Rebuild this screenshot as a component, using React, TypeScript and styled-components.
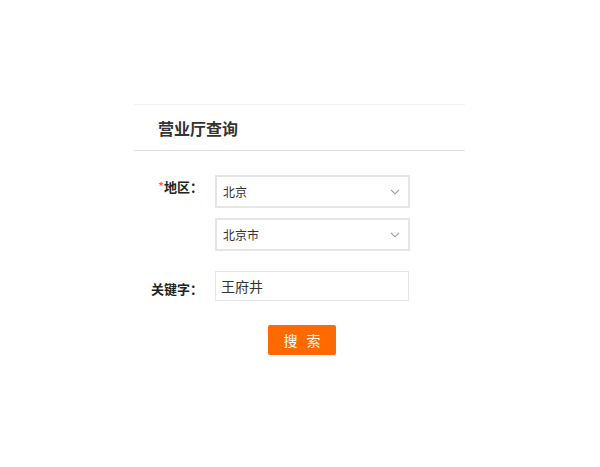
import React from "react";
import styled, { createGlobalStyle } from "styled-components";

const Global = createGlobalStyle`
  html, body { margin: 0; padding: 0; background: #fff; }
  body { font-family: "Noto Sans CJK SC", "Noto Sans", sans-serif; color: #333; text-spacing-trim: space-all; }
  * { box-sizing: border-box; }
`;

const Card = styled.div`
  width: 331px;
  margin: 104px 0 0 134px;
  border-top: 1px solid #f2f2f2;
`;

const Header = styled.div`
  height: 46px;
  border-bottom: 1px solid #e3e3e3;
  display: flex;
  align-items: center;
  padding-left: 24px;
`;

const Title = styled.h2`
  margin: 0;
  font-size: 16px;
  font-weight: bold;
  color: #333;
  line-height: 20px;
`;

const Form = styled.div`
  padding-top: 24px;
  display: flex;
  flex-direction: column;
`;

const Row = styled.div<{ $mt?: number }>`
  display: flex;
  align-items: flex-start;
  margin-top: ${(p) => p.$mt ?? 0}px;
`;

const Label = styled.div<{ $pt: number }>`
  width: 72px;
  text-align: right;
  font-size: 13px;
  font-weight: bold;
  line-height: 20px;
  color: #222;
  padding-top: ${(p) => p.$pt}px;
  padding-right: 3px;
  flex-shrink: 0;
  text-spacing-trim: space-all;
`;

const Star = styled.span`
  color: #ff4d4d;
  font-weight: normal;
`;

const Fields = styled.div`
  margin-left: 9px;
  display: flex;
  flex-direction: column;
  gap: 10px;
`;

const Select = styled.div`
  width: 195px;
  height: 33px;
  border: 2px solid #e5e5e5;
  display: flex;
  align-items: center;
  justify-content: space-between;
  padding: 0 8px 0 6px;
  font-size: 12px;
  color: #333;
  background: #fff;
`;

const Input = styled.div`
  width: 194px;
  height: 30px;
  border: 1px solid #e5e5e5;
  display: flex;
  align-items: center;
  padding-left: 5px;
  font-size: 14px;
  color: #333;
`;

const ButtonRow = styled.div`
  display: flex;
  justify-content: flex-start;
  padding-left: 134px;
  margin-top: 24px;
`;

const Button = styled.button`
  width: 68px;
  height: 30px;
  border: none;
  border-radius: 2px;
  background: #ff6a00;
  color: #fff;
  font-family: inherit;
  font-size: 14px;
  letter-spacing: 3px;
  padding: 0 0 0 3px;
  cursor: pointer;
`;

const Chevron = () => (
  <svg width="10" height="6" viewBox="0 0 10 6" fill="none">
    <path d="M1 0.8 L5 4.8 L9 0.8" stroke="#999" strokeWidth="1.1" />
  </svg>
);

export default function App() {
  return (
    <>
      <Global />
      <Card>
        <Header>
          <Title>营业厅查询</Title>
        </Header>
        <Form>
          <Row>
            <Label $pt={2}>
              <Star>*</Star>地区：
            </Label>
            <Fields>
              <Select>
                <span>北京</span>
                <Chevron />
              </Select>
              <Select>
                <span>北京市</span>
                <Chevron />
              </Select>
            </Fields>
          </Row>
          <Row $mt={20}>
            <Label $pt={8}>关键字：</Label>
            <Fields>
              <Input>王府井</Input>
            </Fields>
          </Row>
          <ButtonRow>
            <Button>搜 索</Button>
          </ButtonRow>
        </Form>
      </Card>
    </>
  );
}
